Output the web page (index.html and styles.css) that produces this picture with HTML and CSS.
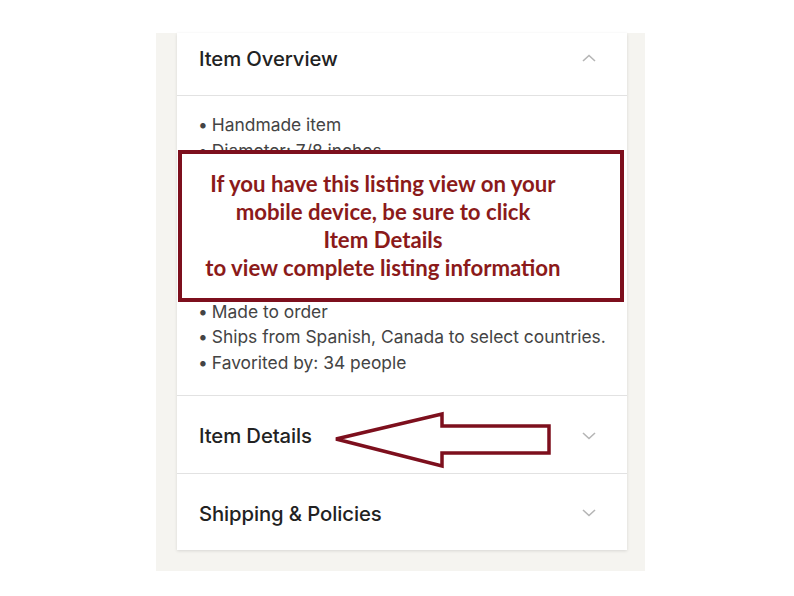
FILE: index.html
```html
<!DOCTYPE html>
<html lang="en">
<head>
    <meta charset="UTF-8">
    <meta name="viewport" content="width=device-width, initial-scale=1.0">
    <title>Item Overview</title>
    <link rel="stylesheet" href="styles.css">
</head>
<body>
    <div class="panel">
        <div class="card">
            <div class="row top">
                <span class="row-title">Item Overview</span>
                <svg class="chev" width="14" height="8" viewBox="0 0 14 8"><path d="M1 7 L7 1.5 L13 7" fill="none" stroke="#b5b5b5" stroke-width="1.6"/></svg>
            </div>
            <ul class="facts">
                <li>Handmade item</li>
                <li>Diameter: 7/8 inches</li>
                <li>Materials: glass, metal</li>
                <li>Gift wrapping available</li>
                <li>Only 1 available</li>
                <li>Ships worldwide</li>
                <li>Gift message available</li>
                <li class="gap">Made to order</li>
                <li>Ships from Spanish, Canada to select countries.</li>
                <li>Favorited by: 34 people</li>
            </ul>
            <div class="row tall">
                <span class="row-title">Item Details</span>
                <svg class="chev" width="14" height="8" viewBox="0 0 14 8"><path d="M1 1 L7 6.5 L13 1" fill="none" stroke="#b5b5b5" stroke-width="1.6"/></svg>
            </div>
            <div class="row tall last">
                <span class="row-title">Shipping &amp; Policies</span>
                <svg class="chev" width="14" height="8" viewBox="0 0 14 8"><path d="M1 1 L7 6.5 L13 1" fill="none" stroke="#b5b5b5" stroke-width="1.6"/></svg>
            </div>

            <div class="note">
                If you have this listing view on your<br>
                mobile device, be sure to click<br>
                Item Details<br>
                to view complete listing information
            </div>
            <svg class="arrow" width="222" height="60" viewBox="0 0 222 60">
                <polygon points="2,30 108,5 108,17 215,17 215,44 108,44 108,57" fill="#fff" stroke="#7d0f1d" stroke-width="3.5" stroke-linejoin="miter"/>
            </svg>
        </div>
    </div>
</body>
</html>
```

FILE: styles.css
```css
body { margin: 0; background: #fff; font-family: "Inter", "Liberation Sans", sans-serif; }
.panel { width: 489px; margin: 33px 0 0 156px; padding: 0 18px 21px 21px; box-sizing: border-box; background: #f5f4f0; }
.card { position: relative; background: #fff; box-shadow: 0 1px 3px rgba(0,0,0,0.12); }
.row { display: flex; align-items: center; justify-content: space-between; height: 62px; padding: 0 31px 0 22px; border-bottom: 1px solid #e2e2e2; }
.row.top { height: 50px; padding-bottom: 12px; }
.row.tall { height: 75px; padding-top: 2px; }
.row.last { border-bottom: none; height: 74px; }
.row-title { font-size: 20.3px; color: #222; font-weight: 500; letter-spacing: -0.1px; }
.chev { display: block; }
.facts { list-style: none; margin: 0; padding: 16px 10px 20px 21px; border-bottom: 1px solid #e2e2e2; }
.facts li { font-size: 17.4px; line-height: 25.5px; color: #444; }
.facts li::before { content: "•"; margin-right: 4px; }
.facts li.gap { margin-top: 8px; }
.note { position: absolute; left: 1px; top: 117px; width: 446px; height: 152px; box-sizing: border-box; border: 4px solid #7d0f1d; background: #fff; padding: 16px 36px 0 0; text-align: center; font-family: "Lato", "Liberation Sans", sans-serif; font-weight: bold; font-size: 22.2px; line-height: 28px; color: #8b1a1a; }
.arrow { position: absolute; left: 157px; top: 376px; }
```
